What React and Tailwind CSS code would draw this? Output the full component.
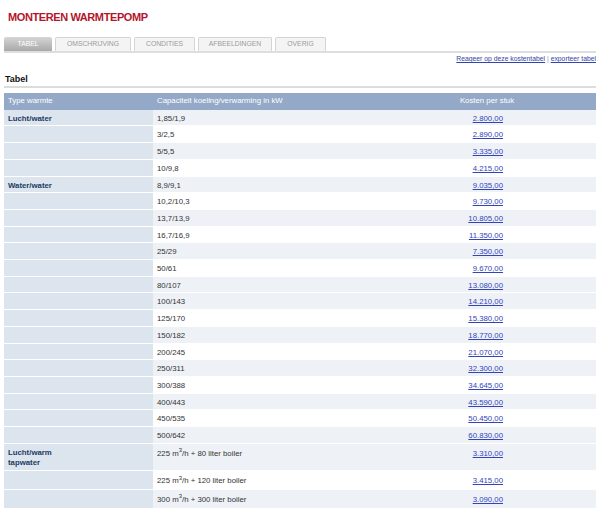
import React from "react";

const groups = [
  {
    type: "Lucht/water",
    rows: [
      ["1,85/1,9", "2.800,00"],
      ["3/2,5", "2.890,00"],
      ["5/5,5", "3.335,00"],
      ["10/9,8", "4.215,00"],
    ],
  },
  {
    type: "Water/water",
    rows: [
      ["8,9/9,1", "9.035,00"],
      ["10,2/10,3", "9.730,00"],
      ["13,7/13,9", "10.805,00"],
      ["16,7/16,9", "11.350,00"],
      ["25/29", "7.350,00"],
      ["50/61", "9.670,00"],
      ["80/107", "13.080,00"],
      ["100/143", "14.210,00", true],
      ["125/170", "15.380,00"],
      ["150/182", "18.770,00"],
      ["200/245", "21.070,00"],
      ["250/311", "32.300,00"],
      ["300/388", "34.645,00"],
      ["400/443", "43.590,00"],
      ["450/535", "50.450,00"],
      ["500/642", "60.830,00"],
    ],
  },
  {
    type: "Lucht/warm tapwater",
    sup: true,
    rows: [
      [["225", "80"], "3.310,00"],
      [["225", "120"], "3.415,00"],
      [["300", "300"], "3.090,00"],
    ],
  },
];

const tabs = [
  { label: "TABEL", w: "w-[48px]", active: true },
  { label: "OMSCHRIJVING", w: "w-[76px]" },
  { label: "CONDITIES", w: "w-[61px]" },
  { label: "AFBEELDINGEN", w: "w-[74px]" },
  { label: "OVERIG", w: "w-[51px]" },
];

const Capacity = ({ value }) => {
  if (!Array.isArray(value)) return value;
  return (
    <>
      {value[0]} m<sup className="text-[6px] top-[-0.6em]">3</sup>/h + {value[1]} liter boiler
    </>
  );
};

export default function App() {
  return (
    <div className="bg-white min-h-[529px] font-['Liberation_Sans',Arial,sans-serif]">
      <div className="ml-[4px] w-[592px] pt-[10px]">
        <h1 className="pl-[4px] text-[11px] leading-[14px] font-bold text-[#b3162b] tracking-[-0.4px]">
          MONTEREN WARMTEPOMP
        </h1>

        {/* tabs */}
        <div className="mt-[13px] flex gap-[3px] border-b-2 border-[#dedede]">
          {tabs.map((t) => (
            <div
              key={t.label}
              className={
                t.active
                  ? `${t.w} h-[14px] flex items-center justify-center rounded-t-[2px] bg-gradient-to-b from-[#d6d6d6] to-[#a9a9a9] text-white text-[6.8px]`
                  : `${t.w} h-[14px] flex items-center justify-center rounded-t-[2px] border border-b-0 border-[#d4d4d4] bg-[#f4f4f4] text-[#9a9a9a] text-[6.8px]`
              }
            >
              {t.label}
            </div>
          ))}
        </div>

        <div className="mt-[1px] text-right text-[6.8px] leading-[10px] text-[#3344aa]">
          <a className="underline" href="#">Reageer op deze kostentabel</a>
          <span className="text-[#999]"> | </span>
          <a className="underline" href="#">exporteer tabel</a>
        </div>

        <h2 className="mt-[10px] pl-[1px] pb-[1px] text-[9px] leading-[11px] font-bold text-[#111] border-b-2 border-[#dcdcdc]">
          Tabel
        </h2>

        <table className="mt-[5px] w-full table-fixed border-collapse text-[7.8px] leading-[10.7px]">
          <colgroup>
            <col className="w-[149px]" />
            <col className="w-[225px]" />
            <col className="w-[218px]" />
          </colgroup>
          <thead>
            <tr className="bg-[#94a9c8] text-white">
              <th className="text-left font-normal pl-[4px] py-[3px]">Type warmte</th>
              <th className="text-left font-normal pl-[4px] py-[3px]">Capaciteit koeling/verwarming in kW</th>
              <th className="text-center font-normal py-[3px]">Kosten per stuk</th>
            </tr>
          </thead>
          <tbody>
            {groups.map((g) => {
              // stripes restart at each group, and where a row says so
              let n = 0;
              return g.rows.map((r, i) => {
                if (r[2]) n = 0;
                const light = n++ % 2 === 0;
                return (
                  <tr key={g.type + i} className={light ? "bg-[#eef2f7]" : "bg-white"}>
                    <td className="align-top bg-[#dce5ee] border-b border-white pl-[4px] pr-[80px] pt-[4px] pb-[1px] font-bold text-[#1d3a63]">
                      {i === 0 ? g.type : ""}
                    </td>
                    <td className={`align-top border-b border-white pl-[4px] text-[#333] ${g.sup ? "pt-[5px] pb-[2px]" : "pt-[4px] pb-[1px]"}`}>
                      <Capacity value={r[0]} />
                    </td>
                    <td className={`align-top border-b border-white text-right pr-[93px] ${g.sup ? "pt-[5px] pb-[2px]" : "pt-[4px] pb-[1px]"}`}>
                      <a href="#" className="underline text-[#3344bb]">{r[1]}</a>
                    </td>
                  </tr>
                );
              });
            })}
          </tbody>
        </table>
      </div>
    </div>
  );
}
